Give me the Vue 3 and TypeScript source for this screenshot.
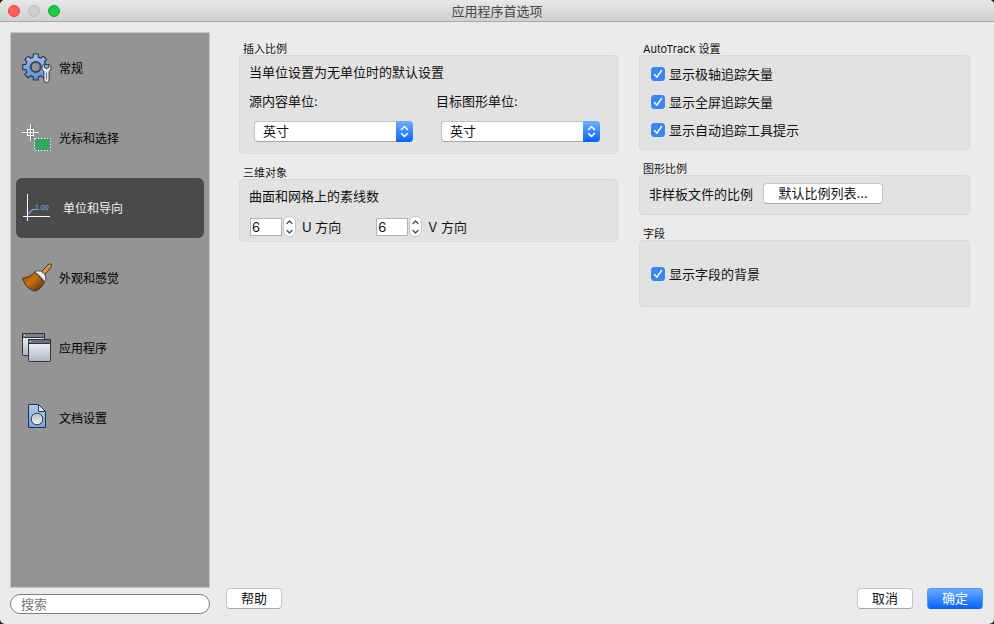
<script setup lang="ts">
import { ref } from 'vue'

interface NavItem {
  id: string
  label: string
}

const navItems: NavItem[] = [
  { id: 'general', label: '常规' },
  { id: 'cursor', label: '光标和选择' },
  { id: 'units', label: '单位和导向' },
  { id: 'look', label: '外观和感觉' },
  { id: 'application', label: '应用程序' },
  { id: 'document', label: '文档设置' },
]
const active = ref('units')
const query = ref('')

const units: string[] = ['英寸', '英尺', '毫米', '厘米', '米']
const insertUnits = ref([
  { id: 'source-unit', label: '源内容单位:', value: '英寸' },
  { id: 'target-unit', label: '目标图形单位:', value: '英寸' },
])

const isolines = ref([
  { id: 'iso-u', label: 'U 方向', value: 6 },
  { id: 'iso-v', label: 'V 方向', value: 6 },
])

const tracking = ref([
  { id: 'polar', label: '显示极轴追踪矢量', checked: true },
  { id: 'fullscreen', label: '显示全屏追踪矢量', checked: true },
  { id: 'tooltip', label: '显示自动追踪工具提示', checked: true },
])
const fields = ref([{ id: 'field-bg', label: '显示字段的背景', checked: true }])

// Outline of an eight-tooth gear: each tooth has two root and two tip corners.
function gearPath(cx: number, cy: number, root: number, tip: number): string {
  const corners: string[] = []
  for (let tooth = 0; tooth < 8; tooth++) {
    const parts: [number, number][] = [
      [-15, root],
      [-10, tip],
      [10, tip],
      [15, root],
    ]
    for (const [offset, radius] of parts) {
      const angle = ((tooth * 45 + offset) * Math.PI) / 180
      corners.push(`${(cx + radius * Math.cos(angle)).toFixed(2)} ${(cy + radius * Math.sin(angle)).toFixed(2)}`)
    }
  }
  return `M${corners.join('L')}Z`
}
const gear = gearPath(13.7, 14, 10.2, 13.2)

function step(index: number, delta: number): void {
  const line = isolines.value[index]
  line.value = Math.max(0, line.value + delta)
}
</script>

<template>
  <div class="window">
    <header class="titlebar">
      <div class="lights">
        <button class="light close" type="button" aria-label="关闭"></button>
        <button class="light minimize" type="button" aria-label="最小化" disabled></button>
        <button class="light expand" type="button" aria-label="缩放"></button>
      </div>
      <h1 class="title">应用程序首选项</h1>
    </header>

    <div class="body">
      <aside class="side">
        <nav class="nav">
          <button
            v-for="item in navItems"
            :key="item.id"
            type="button"
            class="nav-item"
            :class="{ active: item.id === active }"
            @click="active = item.id"
          >
            <svg v-if="item.id === 'general'" class="icon" viewBox="0 0 30 30" aria-hidden="true">
              <defs>
                <linearGradient id="gear" x1="0" y1="0" x2="0" y2="1">
                  <stop offset="0" stop-color="#a3c4ee" />
                  <stop offset="1" stop-color="#5b8ed2" />
                </linearGradient>
              </defs>
              <path :d="gear" fill="url(#gear)" stroke="#2a3a50" stroke-width="1.2" stroke-linejoin="round" />
              <circle cx="13.7" cy="14" r="5" fill="#949494" stroke="#3c4a5c" stroke-width="2.2" />
              <path
                d="M22.300 11q-2.800 1.400-2.400 4.400.3 2 2 3v8.800q0 2.200 2.600 2.200t2.600-2.200v-8.800q1.700-1 2-3 .4-3-2.400-4.400v3.600q-2.200 1.800-4.400 0z"
                fill="#e4e7f0" stroke="#34383f" stroke-linejoin="round"
              />
              <path d="M24.500 19.500v7" stroke="#7c8492" stroke-width="1.200" />
            </svg>
            <svg v-else-if="item.id === 'cursor'" class="icon" viewBox="0 0 30 30" aria-hidden="true">
              <path d="M1 9.500h16M9.500 2v16" stroke="#333" stroke-width="2" opacity=".3" />
              <rect x="5.500" y="6.500" width="6" height="6" fill="none" stroke="#fff" />
              <path d="M0 9.500h17M8.500 1v17" stroke="#fff" />
              <rect x="12.500" y="15.500" width="16" height="12" fill="#2dab5b" stroke="#333" />
              <rect x="12.500" y="15.500" width="16" height="12" fill="none" stroke="#fff" stroke-dasharray="2 1" />
            </svg>
            <svg v-else-if="item.id === 'units'" class="icon" viewBox="0 0 30 30" aria-hidden="true">
              <path d="M4.500 1v27M0 23.500h27" stroke="#fff" fill="none" />
              <path d="M5 21l4.500-4.500H13" stroke="#73a9f5" stroke-width="1.200" fill="none" />
              <text x="12" y="17" class="dimension">1.00</text>
            </svg>
            <svg v-else-if="item.id === 'look'" class="icon" viewBox="0 0 30 30" aria-hidden="true">
              <defs>
                <linearGradient id="bristle" x1="0" y1="0" x2="1" y2="1">
                  <stop offset="0" stop-color="#8a4a08" />
                  <stop offset=".45" stop-color="#c9700c" />
                  <stop offset="1" stop-color="#4e2608" />
                </linearGradient>
              </defs>
              <path d="M19.500 8.500L26 1.800q1.800-1.600 3.200-.5 1.200 1.300-.4 3.200L22.500 12z" fill="#dc9836" stroke="#433526" />
              <path d="M12.500 9Q8 14.500.6 15.300 2 21 6.500 25q4 3.200 7 3 5.500-2 8.800-8.500z" fill="url(#bristle)" stroke="#4a3420" />
              <path d="M12.500 9q2.500-2 6-1 4 1.600 5.200 5 .8 3.500-1.400 6.500-1.200-3.500-3.800-5.700-2.500-2.500-6-4.800z" fill="#eef0f3" stroke="#484848" />
            </svg>
            <svg v-else-if="item.id === 'application'" class="icon" viewBox="0 0 30 30" aria-hidden="true">
              <defs>
                <linearGradient id="pane" x1="0" y1="0" x2="0" y2="1">
                  <stop offset="0" stop-color="#fafafd" />
                  <stop offset="1" stop-color="#adb6ca" />
                </linearGradient>
              </defs>
              <g stroke="#30343b">
                <rect x=".5" y=".5" width="22" height="22" rx=".6" fill="url(#pane)" />
                <rect x=".5" y=".5" width="22" height="4" fill="#77818f" />
                <rect x="6.500" y="6.500" width="22" height="22" rx=".6" fill="url(#pane)" />
                <rect x="6.500" y="6.500" width="22" height="4" fill="#68757d" />
              </g>
              <path d="M2 2.500h1M8 8.500h1" stroke="#fff" />
            </svg>
            <svg v-else class="icon" viewBox="0 0 30 30" aria-hidden="true">
              <defs>
                <linearGradient id="paper" x1="0" y1="0" x2="0" y2="1">
                  <stop offset="0" stop-color="#aecbf0" />
                  <stop offset="1" stop-color="#74a5e0" />
                </linearGradient>
                <linearGradient id="ball" x1="0" y1="0" x2="0" y2="1">
                  <stop offset="0" stop-color="#b7bec9" />
                  <stop offset="1" stop-color="#f2f3f6" />
                </linearGradient>
              </defs>
              <path d="M6.500 1.500h10l7 7v16h-17z" fill="url(#paper)" stroke="#263142" stroke-linejoin="round" />
              <path d="M16.500 1.500v7h7z" fill="#dcecff" stroke="#263142" stroke-linejoin="round" />
              <circle cx="15" cy="16" r="5.800" fill="url(#ball)" stroke="#2d3d55" />
            </svg>
            <span class="nav-label">{{ item.label }}</span>
          </button>
        </nav>
        <input v-model="query" class="search" type="search" placeholder="搜索" aria-label="搜索" />
      </aside>

      <main class="main">
        <div class="columns">
          <div class="column">
            <section aria-labelledby="insert-title">
              <h2 id="insert-title" class="group-title">插入比例</h2>
              <div class="group insert">
                <p class="line">当单位设置为无单位时的默认设置</p>
                <div class="unit-row">
                  <div v-for="unit in insertUnits" :key="unit.id" class="unit">
                    <label class="line" :for="unit.id">{{ unit.label }}</label>
                    <div class="select">
                      <select :id="unit.id" v-model="unit.value">
                        <option v-for="name in units" :key="name" :value="name">{{ name }}</option>
                      </select>
                      <svg class="arrows" viewBox="0 0 17 21" aria-hidden="true">
                        <path d="M5.500 8.500l3-3 3 3M5.500 12.500l3 3 3-3" />
                      </svg>
                    </div>
                  </div>
                </div>
              </div>
            </section>

            <section aria-labelledby="solid-title">
              <h2 id="solid-title" class="group-title">三维对象</h2>
              <div class="group solid">
                <p class="line">曲面和网格上的素线数</p>
                <div class="spin-row">
                  <div v-for="(line, index) in isolines" :key="line.id" class="spin">
                    <input :id="line.id" v-model.number="line.value" type="number" min="0" />
                    <span class="stepper">
                      <button type="button" :aria-label="line.label + ' 增加'" @click="step(index, 1)">
                        <svg viewBox="0 0 11 9" aria-hidden="true"><path d="M3 6.500L5.500 4 8 6.500" /></svg>
                      </button>
                      <button type="button" :aria-label="line.label + ' 减少'" @click="step(index, -1)">
                        <svg viewBox="0 0 11 9" aria-hidden="true"><path d="M3 3.500L5.500 6 8 3.500" /></svg>
                      </button>
                    </span>
                    <label :for="line.id">{{ line.label }}</label>
                  </div>
                </div>
              </div>
            </section>
          </div>

          <div class="column">
            <section aria-labelledby="track-title">
              <h2 id="track-title" class="group-title">AutoTrack 设置</h2>
              <div class="group track">
                <label v-for="option in tracking" :key="option.id" class="check">
                  <span class="box">
                    <input v-model="option.checked" type="checkbox" />
                    <svg viewBox="0 0 14 14" aria-hidden="true"><path d="M3.500 7.500L6 10.200l4.500-6.700" /></svg>
                  </span>
                  {{ option.label }}
                </label>
              </div>
            </section>

            <section aria-labelledby="scale-title">
              <h2 id="scale-title" class="group-title">图形比例</h2>
              <div class="group scale">
                <span>非样板文件的比例</span>
                <button class="push wide" type="button">默认比例列表...</button>
              </div>
            </section>

            <section aria-labelledby="field-title">
              <h2 id="field-title" class="group-title">字段</h2>
              <div class="group field">
                <label v-for="option in fields" :key="option.id" class="check">
                  <span class="box">
                    <input v-model="option.checked" type="checkbox" />
                    <svg viewBox="0 0 14 14" aria-hidden="true"><path d="M3.500 7.500L6 10.200l4.500-6.700" /></svg>
                  </span>
                  {{ option.label }}
                </label>
              </div>
            </section>
          </div>
        </div>

        <footer class="footer">
          <button class="push" type="button">帮助</button>
          <div class="confirm">
            <button class="push" type="button">取消</button>
            <button class="push primary" type="button">确定</button>
          </div>
        </footer>
      </main>
    </div>
  </div>
</template>

<style>
body {
  background: #1d1f24;
}
</style>

<style scoped>
* {
  box-sizing: border-box;
}
.window {
  display: flex;
  flex-direction: column;
  min-height: 100vh;
  border-radius: 5px;
  overflow: hidden;
  background: #ebebeb;
  color: #111;
  font: 13px/18px Inter, "Noto Sans CJK SC", sans-serif;
}
button,
input,
select {
  margin: 0;
  padding: 0;
  border: 0;
  font: inherit;
  color: inherit;
}
h1,
h2,
p {
  margin: 0;
  font-weight: 400;
}

.titlebar {
  display: grid;
  grid-template-columns: 1fr auto 1fr;
  align-items: center;
  height: 22px;
  padding: 0 8px;
  border-bottom: 1px solid #a9a9a9;
  background: linear-gradient(#e8e8e8, #d0d0d0);
}
.lights {
  display: flex;
  gap: 8px;
}
.light {
  width: 12px;
  height: 12px;
  border: 1px solid #e2463f;
  border-radius: 50%;
  background: #ff5f57;
}
.minimize {
  border-color: #bdbdbd;
  background: #cecece;
}
.expand {
  border-color: #12ac28;
  background: #1fca45;
}
.title {
  font-size: 13px;
  line-height: 20px;
  color: #464646;
}

.body {
  flex: 1;
  display: flex;
  gap: 16px;
  padding-left: 10px;
}
.side {
  display: flex;
  flex-direction: column;
  flex: 0 0 200px;
  min-width: 0;
  gap: 6px;
  padding: 10px 0;
}
.nav {
  flex: 1;
  display: flex;
  flex-direction: column;
  gap: 10px;
  padding: 5px;
  border: 1px solid #c6c6c6;
  background: #949494;
}
.nav-item {
  display: flex;
  align-items: center;
  gap: 7px;
  height: 60px;
  padding: 0 6px;
  border-radius: 6px;
  background: none;
  color: #000;
  font-size: 12px;
  text-align: left;
}
.nav-item.active {
  gap: 10px;
  padding: 0 7px;
  background: #4a4a4a;
  color: #f0f0f0;
}
.nav-label {
  padding-top: 2px;
}
.icon {
  width: 30px;
  height: 30px;
}
.dimension {
  fill: #84b6ff;
  font: 7px "Liberation Sans", sans-serif;
}
.search {
  width: 100%;
  height: 20px;
  padding: 0 10px;
  border: 1px solid #7f7f7f;
  border-radius: 10px;
  background: #fff;
  outline: 0;
  appearance: none;
}
.search::placeholder {
  color: #777;
}

.main {
  flex: 1;
  display: flex;
  flex-direction: column;
  justify-content: space-between;
  min-width: 0;
  padding: 19px 11px 15px 0;
}
.columns {
  display: grid;
  grid-template-columns: 379fr 331fr;
  gap: 21px;
  padding: 0 13px;
}
.column {
  display: flex;
  flex-direction: column;
  gap: 11px;
}
.group-title {
  padding: 2px 0 0 4px;
  font-size: 11px;
  line-height: 12px;
}
.group {
  padding: 7px 9px;
  border: 1px solid #d8d8d8;
  border-radius: 4px;
  background: #e2e2e2;
}
.insert {
  padding-bottom: 11px;
}
.line {
  display: block;
}
.unit-row {
  display: flex;
  flex-wrap: wrap;
  gap: 23px;
  margin-top: 11px;
}
.select {
  display: grid;
  width: 159px;
  margin: 11px 0 0 5px;
}
.select select,
.arrows {
  grid-area: 1 / 1;
}
.select select {
  width: 100%;
  height: 21px;
  padding: 0 24px 2px 8px;
  border: 1px solid #c2c2c2;
  border-bottom-color: #a6a6a6;
  border-radius: 4px;
  background: #fff;
  appearance: none;
}
.arrows {
  justify-self: end;
  width: 17px;
  height: 21px;
  border-radius: 0 4px 4px 0;
  background: linear-gradient(#6cb0fb, #0a62fb);
  pointer-events: none;
}
.arrows path,
.box path,
.stepper path {
  fill: none;
  stroke: #fff;
  stroke-width: 1.5;
  stroke-linecap: round;
  stroke-linejoin: round;
}

.solid {
  padding-bottom: 4px;
}
.spin-row {
  display: flex;
  flex-wrap: wrap;
  gap: 35px;
  margin-top: 11px;
  padding-left: 1px;
}
.spin {
  display: flex;
  align-items: center;
}
.spin input {
  width: 32px;
  height: 18px;
  padding-left: 1px;
  border: 1px solid #b4b4b4;
  background: #fff;
  appearance: textfield;
}
.spin input::-webkit-inner-spin-button {
  appearance: none;
}
.stepper {
  display: flex;
  flex-direction: column;
  width: 13px;
  height: 21px;
  margin: 0 6px 0 1px;
  overflow: hidden;
  border: 1px solid #c4c4c4;
  border-radius: 6px;
  background: #fff;
}
.stepper button {
  display: flex;
  flex: 1;
  background: none;
}
.stepper svg {
  width: 11px;
  height: 9px;
}
.stepper path {
  stroke: #444;
  stroke-width: 1.2;
}

.track {
  padding: 4px 11px 5px;
}
.field {
  padding: 19px 11px 18px;
}
.check {
  display: flex;
  align-items: center;
  gap: 4px;
  height: 28px;
}
.box {
  display: grid;
}
.box input,
.box svg {
  grid-area: 1 / 1;
  width: 14px;
  height: 14px;
}
.box input {
  border: 1px solid #bcbcbc;
  border-radius: 3px;
  background: #fff;
  appearance: none;
}
.box input:checked {
  border-color: #3b86f7;
  background: #3b86f7;
}
.box svg {
  pointer-events: none;
}
.scale {
  display: flex;
  align-items: center;
  gap: 10px;
  padding-bottom: 10px;
}

.footer,
.confirm {
  display: flex;
  justify-content: space-between;
  gap: 14px;
}
.push {
  width: 56px;
  height: 21px;
  padding-bottom: 1px;
  border: 1px solid #c6c6c6;
  border-bottom-color: #a8a8a8;
  border-radius: 4px;
  background: #fff;
  line-height: 18px;
}
.wide {
  width: 120px;
}
.primary {
  border-color: #4a96fa;
  border-bottom-color: #0a5ff0;
  background: linear-gradient(#66acfb, #0a64fc);
  color: #fff;
}
</style>
